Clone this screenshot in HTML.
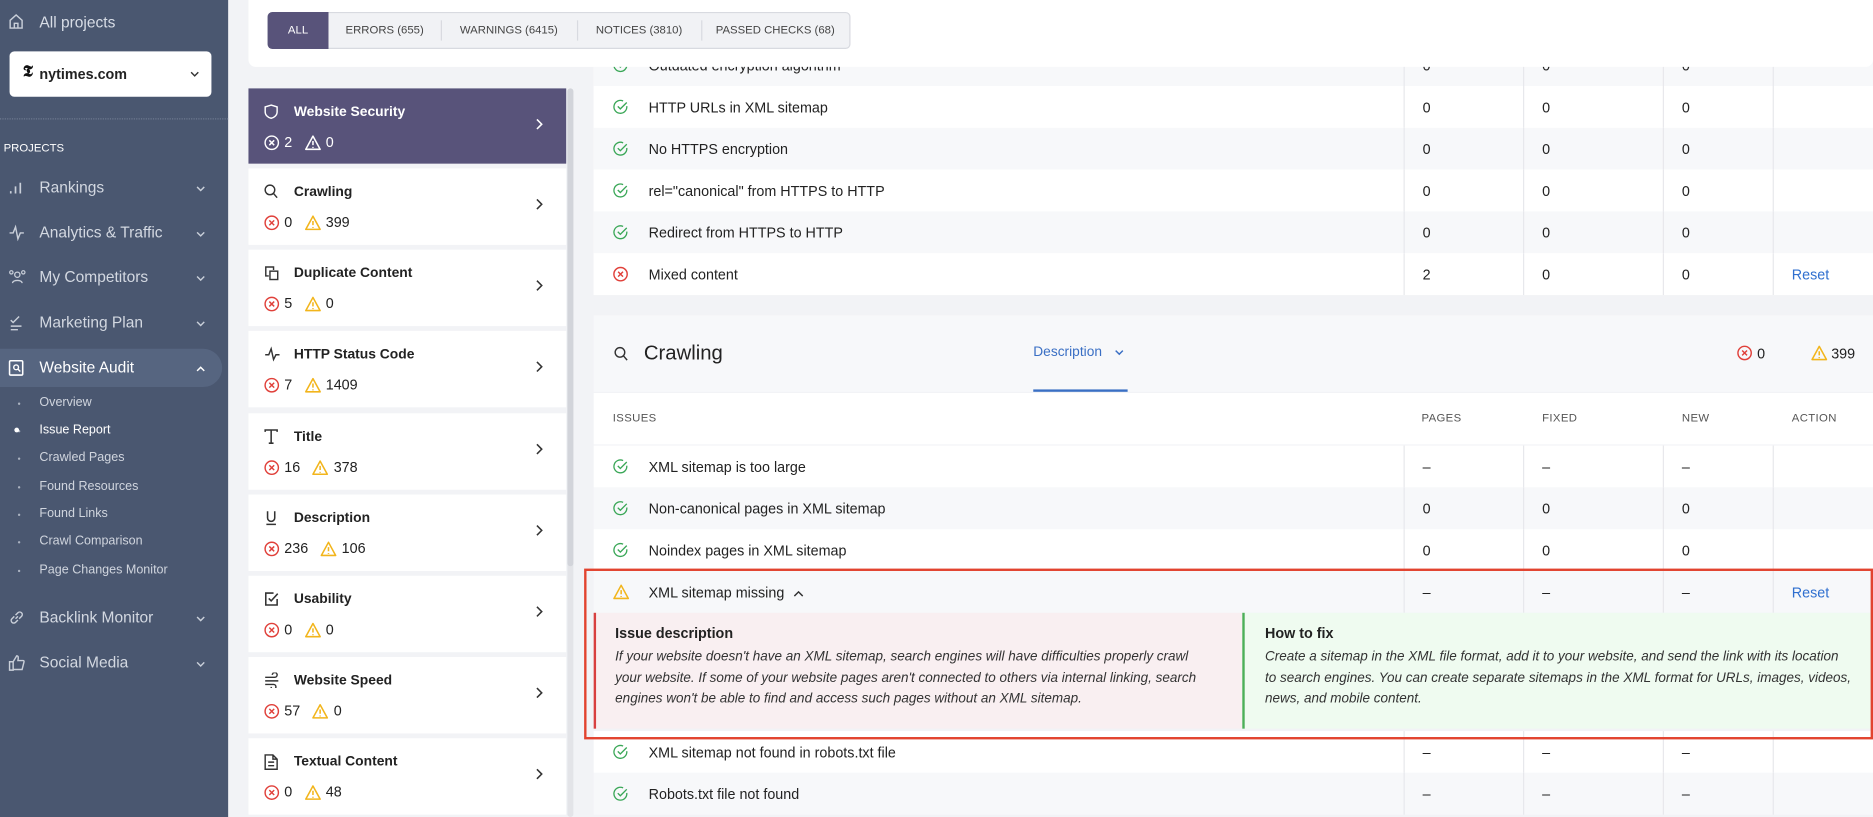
<!DOCTYPE html>
<html><head><meta charset="utf-8"><style>
*{box-sizing:border-box;margin:0;padding:0}
html,body{width:1873px;height:816px;overflow:hidden;background:#f2f3f6;font-family:"Liberation Sans",sans-serif}
#w{position:absolute;left:0;top:0;width:1568px;height:684px;transform:scale(1.19452);transform-origin:0 0;background:#f2f3f6}
.a{position:absolute}
#sb{left:0;top:0;width:191px;height:684px;background:#4a5770;color:#dfe3ea;z-index:6}
.mi{position:absolute;left:0;width:191px;font-size:13px;color:#d3d8e1}
.mi .t{position:absolute;left:33px;top:-8px}
.mi svg.ic{position:absolute;left:7px;top:-7px}
.mi .ch{position:absolute;left:164px;top:-2px}
.sub{position:absolute;left:33px;font-size:10.5px;color:#d0d5de}
.sub:before{content:"";position:absolute;left:-18px;top:6px;width:2px;height:2px;background:#aab2c0;border-radius:50%}
.card{position:absolute;left:208px;width:266px;height:64px;background:#fff}
.card .tt{position:absolute;left:38px;top:13px;font-size:11.6px;font-weight:bold;color:#222}
.card .ic{position:absolute;left:13px;top:13px}
.card .cn{position:absolute;left:13px;top:38px;font-size:12px;color:#222;display:flex;align-items:center}
.card .cn svg{margin-right:4px}
.card .arr{position:absolute;left:240px;top:25px}
.row{position:absolute;left:497px;width:1071px;height:35px;font-size:12px;color:#222}
.row .n{position:absolute;left:46px;top:11px}
.row .ic{position:absolute;left:16px;top:11px}
.row .c1{position:absolute;left:694px;top:11px}
.row .c2{position:absolute;left:794px;top:11px}
.row .c3{position:absolute;left:911px;top:11px}
.row .c4{position:absolute;left:1003px;top:11px;color:#2f6fcf}
.g{background:#f7f8fa}
.wh{background:#fff}
.vl{position:absolute;top:0;width:1px;background:#e7e8ec}
.hd{position:absolute;font-size:9.5px;color:#555;letter-spacing:.3px}
.tab{position:absolute;top:11px;height:29px;font-size:9.5px;color:#444;line-height:29px;text-align:center}
#top{position:absolute;left:0;top:0;z-index:5}
</style></head><body><div id="w">

<div id="sb" class="a">
 <svg class="a" style="left:7px;top:11px" width="13" height="14" viewBox="0 0 13 14"><path d="M1.5 6L6.5 1.5 11.5 6V12.5H1.5Z M5 12.5V8.5H8V12.5" fill="none" stroke="#c9cfd9" stroke-width="1.2"/></svg>
 <div class="a" style="left:33px;top:11px;font-size:13px;color:#d8dde6">All projects</div>
 <div class="a" style="left:8px;top:43px;width:169px;height:38px;background:#fff;border-radius:4px">
  <div class="a" style="left:11px;top:10px;font-family:'Liberation Serif',serif;font-weight:bold;font-size:14px;color:#111">𝕿</div>
  <div class="a" style="left:25px;top:12px;font-size:12px;color:#222;font-weight:bold">nytimes.com</div>
  <svg class="a" style="left:151px;top:16px" width="8" height="6" viewBox="0 0 8 6"><path d="M1 1.5l3 3 3-3" fill="none" stroke="#333" stroke-width="1.2"/></svg>
 </div>
 <div class="a" style="left:0;top:99px;width:191px;border-top:1px dotted #6e7a90"></div>
 <div class="a" style="left:3px;top:119px;font-size:9.5px;color:#fff">PROJECTS</div>

 <div class="mi" style="top:157px"><svg class="ic" width="13" height="14" viewBox="0 0 13 14"><path d="M2 12V10M6 12V6M10 12V3" stroke="#c9cfd9" stroke-width="1.4"/></svg><span class="t">Rankings</span><svg class="ch" width="8" height="6" viewBox="0 0 8 6"><path d="M1 1.5l3 3 3-3" fill="none" stroke="#c9cfd9" stroke-width="1.2"/></svg></div>
 <div class="mi" style="top:195px"><svg class="ic" width="14" height="14" viewBox="0 0 14 14"><path d="M1 7H4L6 2 8 12 10 7H13" fill="none" stroke="#c9cfd9" stroke-width="1.2"/></svg><span class="t">Analytics &amp; Traffic</span><svg class="ch" width="8" height="6" viewBox="0 0 8 6"><path d="M1 1.5l3 3 3-3" fill="none" stroke="#c9cfd9" stroke-width="1.2"/></svg></div>
 <div class="mi" style="top:232px"><svg class="ic" width="15" height="14" viewBox="0 0 15 14"><circle cx="7.5" cy="5" r="2.2" fill="none" stroke="#c9cfd9" stroke-width="1.1"/><path d="M3.5 12c0-3 8-3 8 0" fill="none" stroke="#c9cfd9" stroke-width="1.1"/><circle cx="2.5" cy="3" r="1.4" fill="none" stroke="#c9cfd9"/><circle cx="12.5" cy="3" r="1.4" fill="none" stroke="#c9cfd9"/></svg><span class="t">My Competitors</span><svg class="ch" width="8" height="6" viewBox="0 0 8 6"><path d="M1 1.5l3 3 3-3" fill="none" stroke="#c9cfd9" stroke-width="1.2"/></svg></div>
 <div class="mi" style="top:270px"><svg class="ic" width="13" height="14" viewBox="0 0 13 14"><path d="M2 5l2 2 5-5M2 10H11M2 13H8" fill="none" stroke="#c9cfd9" stroke-width="1.2"/></svg><span class="t">Marketing Plan</span><svg class="ch" width="8" height="6" viewBox="0 0 8 6"><path d="M1 1.5l3 3 3-3" fill="none" stroke="#c9cfd9" stroke-width="1.2"/></svg></div>
 <div class="a" style="left:0;top:292px;width:186px;height:32px;background:#566580;border-radius:0 16px 16px 0"></div>
 <div class="mi" style="top:308px;color:#fff"><svg class="ic" width="13" height="14" viewBox="0 0 13 14"><rect x="1" y="1" width="11" height="12" rx="1" fill="none" stroke="#fff" stroke-width="1.3"/><circle cx="6.5" cy="6.5" r="2" fill="none" stroke="#fff" stroke-width="1.2"/><path d="M8 8l2 2" stroke="#fff" stroke-width="1.2"/></svg><span class="t">Website Audit</span><svg class="ch" width="8" height="6" viewBox="0 0 8 6"><path d="M1 4.5l3-3 3 3" fill="none" stroke="#fff" stroke-width="1.2"/></svg></div>
 <div class="sub" style="top:331px">Overview</div>
 <div class="sub" style="top:354px;color:#fff">Issue Report</div>
 <div class="a" style="left:12px;top:358px;width:4px;height:4px;border-radius:50%;background:#fff"></div>
 <div class="sub" style="top:377px">Crawled Pages</div>
 <div class="sub" style="top:401px">Found Resources</div>
 <div class="sub" style="top:424px">Found Links</div>
 <div class="sub" style="top:447px">Crawl Comparison</div>
 <div class="sub" style="top:471px">Page Changes Monitor</div>
 <div class="mi" style="top:517px"><svg class="ic" width="14" height="14" viewBox="0 0 14 14"><path d="M6 8l2-2M5 6L3 8a2 2 0 0 0 3 3l2-2M9 8l2-2a2 2 0 0 0-3-3L6 5" fill="none" stroke="#c9cfd9" stroke-width="1.2"/></svg><span class="t">Backlink Monitor</span><svg class="ch" width="8" height="6" viewBox="0 0 8 6"><path d="M1 1.5l3 3 3-3" fill="none" stroke="#c9cfd9" stroke-width="1.2"/></svg></div>
 <div class="mi" style="top:555px"><svg class="ic" width="14" height="14" viewBox="0 0 14 14"><path d="M1 6H4V13H1ZM4 6L7 1C8.5 1 8.5 2.5 8 5H12.5C13 5 13.3 5.6 13 6.5L11.5 12.5H4" fill="none" stroke="#c9cfd9" stroke-width="1.2"/></svg><span class="t">Social Media</span><svg class="ch" width="8" height="6" viewBox="0 0 8 6"><path d="M1 1.5l3 3 3-3" fill="none" stroke="#c9cfd9" stroke-width="1.2"/></svg></div>
</div>

<!-- left scrollbar -->
<div class="a" style="left:475px;top:74px;width:5px;height:610px;background:#e3e4e8;border-radius:3px"></div>
<div class="a" style="left:475px;top:74px;width:5px;height:400px;background:#d2d4da;border-radius:3px"></div>

<!-- category cards -->
<div class="card" style="top:74px;height:63px;background:#58537a">
 <svg class="ic" width="12" height="13" viewBox="0 0 12 13"><path d="M6 1L11 2.5V6.5C11 9.5 8.5 11.5 6 12 3.5 11.5 1 9.5 1 6.5V2.5Z" fill="none" stroke="#fff" stroke-width="1.2"/></svg>
 <div class="tt" style="color:#fff">Website Security</div>
 <div class="cn" style="color:#fff"><svg width="13" height="13" viewBox="0 0 14 14"><circle cx="7" cy="7" r="6" fill="none" stroke="#fff" stroke-width="1.3"/><path d="M4.8 4.8l4.4 4.4M9.2 4.8l-4.4 4.4" stroke="#fff" stroke-width="1.3"/></svg>2<span style="width:10px"></span><svg width="14" height="13" viewBox="0 0 14 13"><path d="M7 1L13 12H1Z" fill="none" stroke="#fff" stroke-width="1.3" stroke-linejoin="round"/><path d="M7 5v3.5M7 10v.8" stroke="#fff" stroke-width="1.3"/></svg>0</div>
 <svg class="arr" width="7" height="10" viewBox="0 0 7 10"><path d="M1.5 1l4 4-4 4" fill="none" stroke="#fff" stroke-width="1.3"/></svg>
</div>
<div id="cards"></div>

<!-- top security table (scrolled) -->
<div class="a" style="left:497px;top:30px;width:1071px;height:217px;background:#fff"></div>
<div id="sec"></div>

<!-- top tabs card -->
<div id="top">
<div class="a" style="left:208px;top:0;width:1360px;height:56px;background:#fff;border-radius:0 0 6px 6px"></div>
<div class="a" style="left:224px;top:10px;width:488px;height:31px;border:1px solid #d8dae0;border-radius:4px;background:#f1f2f5"></div>
<div class="tab" style="left:224px;width:51px;background:#58537a;color:#fff;border-radius:4px 0 0 4px;top:10px;height:31px;line-height:31px">ALL</div>
<div class="tab" style="left:275px;width:94px">ERRORS (655)</div>
<div class="a" style="left:369px;top:17px;width:1px;height:17px;background:#d8dae0"></div>
<div class="tab" style="left:369px;width:114px">WARNINGS (6415)</div>
<div class="a" style="left:483px;top:17px;width:1px;height:17px;background:#d8dae0"></div>
<div class="tab" style="left:483px;width:104px">NOTICES (3810)</div>
<div class="a" style="left:587px;top:17px;width:1px;height:17px;background:#d8dae0"></div>
<div class="tab" style="left:587px;width:124px">PASSED CHECKS (68)</div>
</div>

<!-- crawling section -->
<div class="a" style="left:497px;top:264px;width:1071px;height:64px;background:#f7f8fa"></div>
<svg class="a" style="left:514px;top:290px" width="12" height="13" viewBox="0 0 12 13"><circle cx="5" cy="5" r="4" fill="none" stroke="#333" stroke-width="1.2"/><path d="M8 8l3 3.5" stroke="#333" stroke-width="1.2"/></svg>
<div class="a" style="left:539px;top:286px;font-size:17px;color:#222">Crawling</div>
<div class="a" style="left:865px;top:289px;font-size:11.5px;color:#3a6fc4">Description</div>
<svg class="a" style="left:933px;top:292px" width="8" height="6" viewBox="0 0 8 6"><path d="M1 1.5l3 3 3-3" fill="none" stroke="#3a6fc4" stroke-width="1.2"/></svg>
<div class="a" style="left:865px;top:326px;width:79px;height:2px;background:#3a6fc4"></div>
<svg class="a" style="left:1454px;top:289px" width="13" height="13" viewBox="0 0 14 14"><circle cx="7" cy="7" r="6" fill="none" stroke="#e0403a" stroke-width="1.3"/><path d="M4.8 4.8l4.4 4.4M9.2 4.8l-4.4 4.4" stroke="#e0403a" stroke-width="1.3"/></svg>
<div class="a" style="left:1471px;top:289px;font-size:12px;color:#222">0</div>
<svg class="a" style="left:1516px;top:289px" width="14" height="13" viewBox="0 0 14 13"><path d="M7 1L13 12H1Z" fill="none" stroke="#f2b51c" stroke-width="1.3" stroke-linejoin="round"/><path d="M7 5v3.5M7 10v.8" stroke="#f2b51c" stroke-width="1.3"/></svg>
<div class="a" style="left:1533px;top:289px;font-size:12px;color:#222">399</div>

<div class="a" style="left:497px;top:329px;width:1071px;height:43px;background:#fff"></div>
<div class="hd" style="left:513px;top:345px">ISSUES</div>
<div class="hd" style="left:1190px;top:345px">PAGES</div>
<div class="hd" style="left:1291px;top:345px">FIXED</div>
<div class="hd" style="left:1408px;top:345px">NEW</div>
<div class="hd" style="left:1500px;top:345px">ACTION</div>
<div id="crw"></div>

<!-- expanded description -->
<div class="a" style="left:497px;top:513px;width:543px;height:97px;background:#f9eff1;border-left:2px solid #d84040"></div>
<div class="a" style="left:1040px;top:513px;width:528px;height:97px;background:#effbf0;border-left:2px solid #4caf58"></div>
<div class="a" style="left:515px;top:523px;font-size:12px;font-weight:bold;color:#222">Issue description</div>
<div class="a" style="left:515px;top:542px;font-size:11.3px;font-style:italic;line-height:17.5px;color:#333;white-space:nowrap">If your website doesn't have an XML sitemap, search engines will have difficulties properly crawl<br>your website. If some of your website pages aren't connected to others via internal linking, search<br>engines won't be able to find and access such pages without an XML sitemap.</div>
<div class="a" style="left:1059px;top:523px;font-size:12px;font-weight:bold;color:#222">How to fix</div>
<div class="a" style="left:1059px;top:542px;width:509px;overflow:hidden;font-size:11.3px;font-style:italic;line-height:17.5px;color:#333;white-space:nowrap">Create a sitemap in the XML file format, add it to your website, and send the link with its location<br>to search engines. You can create separate sitemaps in the XML format for URLs, images, videos,<br>news, and mobile content.</div>
<div class="a" style="left:489px;top:476px;width:1079px;height:143px;border:2px solid #e2432f"></div>

<script>
var E='<svg width="13" height="13" viewBox="0 0 14 14"><circle cx="7" cy="7" r="6" fill="none" stroke="#e0403a" stroke-width="1.3"/><path d="M4.8 4.8l4.4 4.4M9.2 4.8l-4.4 4.4" stroke="#e0403a" stroke-width="1.3"/></svg>';
var W='<svg width="14" height="13" viewBox="0 0 14 13"><path d="M7 1L13 12H1Z" fill="none" stroke="#f2b51c" stroke-width="1.3" stroke-linejoin="round"/><path d="M7 5v3.5M7 10v.8" stroke="#f2b51c" stroke-width="1.3"/></svg>';
var C='<svg width="13" height="13" viewBox="0 0 14 14"><path d="M12.6 6.3A5.8 5.8 0 1 1 9.3 1.7" fill="none" stroke="#3aa757" stroke-width="1.2"/><path d="M4.5 6.5l2.3 2.3L12.6 3" fill="none" stroke="#3aa757" stroke-width="1.2"/></svg>';
var A='<svg class="arr" width="7" height="10" viewBox="0 0 7 10"><path d="M1.5 1l4 4-4 4" fill="none" stroke="#333" stroke-width="1.3"/></svg>';
var s='#333';
var ic={
cr:'<svg width="12" height="13" viewBox="0 0 12 13"><circle cx="5" cy="5" r="4" fill="none" stroke="'+s+'" stroke-width="1.2"/><path d="M8 8l3 3.5" stroke="'+s+'" stroke-width="1.2"/></svg>',
dup:'<svg width="13" height="13" viewBox="0 0 13 13"><path d="M4 9H1.5V1.5H8V4" fill="none" stroke="'+s+'" stroke-width="1.2"/><rect x="5" y="5" width="6.5" height="7" fill="none" stroke="'+s+'" stroke-width="1.2"/></svg>',
http:'<svg width="14" height="13" viewBox="0 0 14 13"><path d="M1 7H4L6 2 8 11 10 7H13" fill="none" stroke="'+s+'" stroke-width="1.2"/></svg>',
ti:'<svg width="12" height="13" viewBox="0 0 12 13"><path d="M1 2.5V1H11V2.5M6 1V12M4 12H8" fill="none" stroke="'+s+'" stroke-width="1.3"/></svg>',
de:'<svg width="12" height="13" viewBox="0 0 12 13"><path d="M3 1V6.5A3 3 0 0 0 9 6.5V1M2 12H10" fill="none" stroke="'+s+'" stroke-width="1.3"/></svg>',
us:'<svg width="13" height="13" viewBox="0 0 13 13"><path d="M11 6.5V11.5H1.5V1.5H8" fill="none" stroke="'+s+'" stroke-width="1.3"/><path d="M4 6l2 2 5.5-6" fill="none" stroke="'+s+'" stroke-width="1.3"/></svg>',
sp:'<svg width="14" height="13" viewBox="0 0 14 13"><path d="M1 4H9A2 2 0 1 0 7 2M1 7H12M1 10H8A2 2 0 1 1 6 12" fill="none" stroke="'+s+'" stroke-width="1.2"/></svg>',
tx:'<svg width="12" height="14" viewBox="0 0 12 14"><path d="M1 1H7.5L11 4.5V13H1Z M7.5 1V4.5H11M3.5 7H8.5M3.5 10H8.5" fill="none" stroke="'+s+'" stroke-width="1.2"/></svg>'};
var cards=[['cr','Crawling',0,399,141],['dup','Duplicate Content',5,0,209],['http','HTTP Status Code',7,1409,277],['ti','Title',16,378,346],['de','Description',236,106,414],['us','Usability',0,0,482],['sp','Website Speed',57,0,550],['tx','Textual Content',0,48,618]];
var h='';cards.forEach(function(c){h+='<div class="card" style="top:'+c[4]+'px"><span class="ic">'+ic[c[0]]+'</span><div class="tt">'+c[1]+'</div><div class="cn">'+E+c[2]+'<span style="width:10px"></span>'+W+c[3]+'</div>'+A+'</div>';});
document.getElementById('cards').outerHTML=h;
function rows(list){var o='';list.forEach(function(r,i){o+='<div class="row '+(r[5]||'wh')+'" style="top:'+r[0]+'px">'+
'<span class="ic">'+r[1]+'</span><span class="n">'+r[2]+'</span>'+
'<div class="vl" style="left:678px;height:35px"></div><div class="vl" style="left:778px;height:35px"></div><div class="vl" style="left:895px;height:35px"></div><div class="vl" style="left:987px;height:35px"></div>'+
'<span class="c1">'+r[3][0]+'</span><span class="c2">'+r[3][1]+'</span><span class="c3">'+r[3][2]+'</span>'+(r[4]?'<span class="c4">Reset</span>':'')+'</div>';});return o;}
var z=['0','0','0'],d=['–','–','–'];
document.getElementById('sec').outerHTML=rows([
[37,C,'Outdated encryption algorithm',z,0,'g'],
[72,C,'HTTP URLs in XML sitemap',z,0,'wh'],
[107,C,'No HTTPS encryption',z,0,'g'],
[142,C,'rel="canonical" from HTTPS to HTTP',z,0,'wh'],
[177,C,'Redirect from HTTPS to HTTP',z,0,'g'],
[212,E,'Mixed content',['2','0','0'],1,'wh']]);
document.getElementById('crw').outerHTML=rows([
[373,C,'XML sitemap is too large',d,0,'wh'],
[408,C,'Non-canonical pages in XML sitemap',z,0,'g'],
[443,C,'Noindex pages in XML sitemap',z,0,'wh'],
[478,W,'XML sitemap missing <svg width="9" height="6" viewBox="0 0 9 6" style="margin-left:4px"><path d="M1 5l3.5-3.5L8 5" fill="none" stroke="#333" stroke-width="1.2"/></svg>',d,1,'g'],
[612,C,'XML sitemap not found in robots.txt file',d,0,'wh'],
[647,C,'Robots.txt file not found',d,0,'g']]);
</script>
</div></body></html>
